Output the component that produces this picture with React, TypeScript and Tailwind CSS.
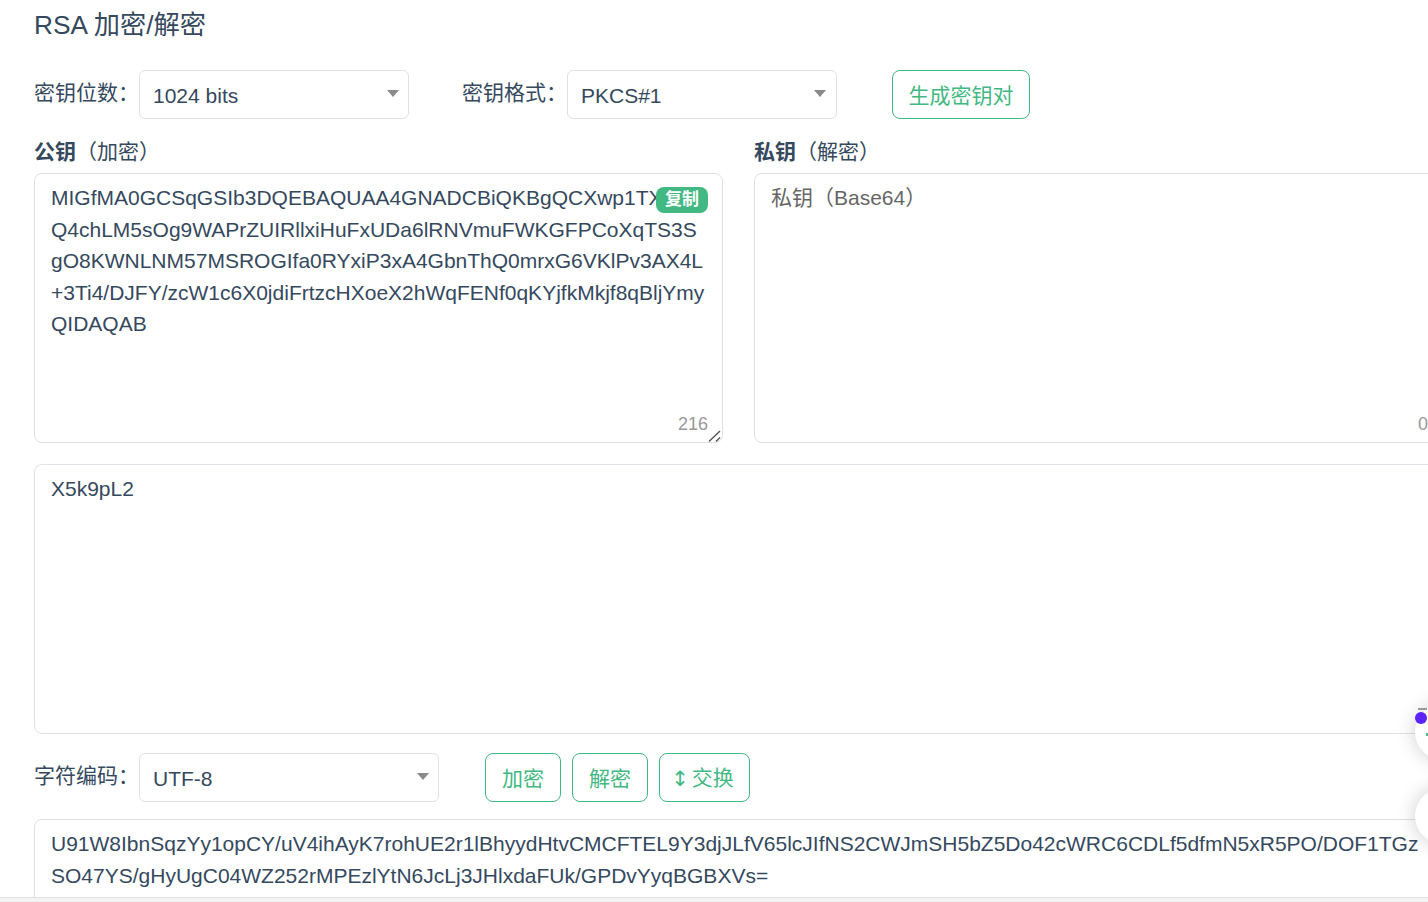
import React from 'react';

const font = { fontFamily: '"Liberation Sans", "Noto Sans CJK SC", sans-serif' };

const publicKey = `MIGfMA0GCSqGSIb3DQEBAQUAA4GNADCBiQKBgQCXwp1TX
Q4chLM5sOg9WAPrZUIRllxiHuFxUDa6lRNVmuFWKGFPCoXqTS3S
gO8KWNLNM57MSROGIfa0RYxiP3xA4GbnThQ0mrxG6VKlPv3AX4L
+3Ti4/DJFY/zcW1c6X0jdiFrtzcHXoeX2hWqFENf0qKYjfkMkjf8qBljYmy
QIDAQAB`;

const output = `U91W8IbnSqzYy1opCY/uV4ihAyK7rohUE2r1lBhyydHtvCMCFTEL9Y3djJLfV65lcJIfNS2CWJmSH5bZ5Do42cWRC6CDLf5dfmN5xR5PO/DOF1TGz
SO47YS/gHyUgC04WZ252rMPEzlYtN6JcLj3JHlxdaFUk/GPDvYyqBGBXVs=`;

function Select({ value, width, arrowPad = 'pr-[9px]' }: { value: string; width: string; arrowPad?: string }) {
  return (
    <div className={`flex h-[49px] items-center justify-between rounded-[6px] border border-[#e0e0e6] bg-white pl-[13px] ${arrowPad} ${width}`}>
      <span className="pt-[2px] text-[21px] text-[#35495e]">{value}</span>
      <span className="mb-[2px] h-0 w-0 border-x-[6px] border-t-[7px] border-x-transparent border-t-[#8a8a8a]" />
    </div>
  );
}

function GreenButton({ children, width }: { children: React.ReactNode; width: string }) {
  return (
    <button className={`h-[49px] rounded-[8px] border border-[#42b883] bg-white pt-[2px] text-[21px] text-[#42b883] ${width}`}>
      {children}
    </button>
  );
}

export default function App() {
  return (
    <div style={font} className="relative h-[902px] w-[1428px] overflow-hidden bg-white text-[#35495e]">
      <div className="w-[1443px] pl-[34px]">
        <h2 className="h-[70px] pt-[6px] text-[26.25px] leading-[39px] font-normal">RSA 加密/解密</h2>

        <div className="flex items-center">
          <span className="w-[105px] pb-[3px] text-[21px] whitespace-nowrap">{'密钥位数\uFF1A'}</span>
          <Select value="1024 bits" width="w-[270px]" />
          <span className="ml-[53px] w-[105px] pb-[3px] text-[21px] whitespace-nowrap">{'密钥格式\uFF1A'}</span>
          <Select value="PKCS#1" width="w-[270px]" arrowPad="pr-[10px]" />
          <div className="ml-[55px]">
            <GreenButton width="w-[138px]">生成密钥对</GreenButton>
          </div>
        </div>

        <div className="mt-[17px] flex gap-[31px]">
          <div className="w-[689px]">
            <div className="h-[37px] text-[21px] leading-[31px]"><b>公钥</b>{'\uFF08加密\uFF09'}</div>
            <div className="relative h-[270px]">
              <textarea
                readOnly
                wrap="off"
                value={publicKey}
                className="h-[270px] w-full resize-none overflow-hidden rounded-[8px] border border-[#e0e0e6] px-4 py-2 text-[21px] leading-[31.5px] text-[#35495e] outline-none"
              />
              <span className="absolute right-[15px] top-[14px] flex h-[26px] w-[52px] items-center justify-center rounded-[8px] bg-[#42b883] text-[17px] font-bold text-white">复制</span>
              <span className="absolute right-[15px] top-[238px] text-[18px] text-[#999]">216</span>
              <svg className="absolute left-[674px] top-[257px]" width="13" height="12" viewBox="0 0 13 12">
                <path d="M1 11.5 L12 1 M8 11.5 L12 7.5" stroke="#555" strokeWidth="1.4" fill="none" />
              </svg>
            </div>
          </div>
          <div className="w-[689px]">
            <div className="h-[37px] text-[21px] leading-[31px]"><b>私钥</b>{'\uFF08解密\uFF09'}</div>
            <div className="relative h-[270px]">
              <textarea
                readOnly
                placeholder={'私钥\uFF08Base64\uFF09'}
                className="h-[270px] w-full resize-none overflow-hidden rounded-[8px] border border-[#e0e0e6] px-4 py-2 text-[21px] leading-[31.5px] outline-none placeholder:text-[#666]"
              />
              <span className="absolute right-[15px] top-[238px] text-[18px] text-[#999]">0</span>
            </div>
          </div>
        </div>

        <textarea
          readOnly
          value="X5k9pL2"
          className="mt-[21px] block h-[270px] w-full resize-none overflow-hidden rounded-[8px] border border-[#e0e0e6] px-4 py-2 text-[21px] leading-[31.5px] text-[#35495e] outline-none"
        />

        <div className="mt-[19px] flex items-center">
          <span className="w-[105px] pb-[3px] text-[21px] whitespace-nowrap">{'字符编码\uFF1A'}</span>
          <Select value="UTF-8" width="w-[300px]" />
          <div className="ml-[46px] flex gap-[11px]">
            <GreenButton width="w-[76px]">加密</GreenButton>
            <GreenButton width="w-[76px]">解密</GreenButton>
            <GreenButton width="w-[91px] pr-[4px]">
              <span className="mr-[3px] inline-block translate-y-[1px] font-['DejaVu_Sans']">↕</span>交换
            </GreenButton>
          </div>
        </div>

        <textarea
          readOnly
          wrap="off"
          value={output}
          className="mt-[17px] block h-[270px] w-full resize-none overflow-hidden rounded-[8px] border border-[#e0e0e6] px-4 py-2 text-[21px] leading-[31.5px] text-[#35495e] outline-none"
        />
      </div>

      {/* floating widgets clipped by the right edge */}
      <div className="absolute left-[1415px] top-[704px] h-[56px] w-[56px] rounded-full bg-white shadow-[0_0_20px_rgba(0,0,0,0.2)]">
        <span className="absolute left-[3px] top-[4px] h-[2px] w-[9px] bg-[#999]" />
        <span className="absolute left-0 top-[8px] h-[12px] w-[12px] rounded-full bg-[#5b21ff]" />
        <span className="absolute left-[11px] top-[29px] h-[3px] w-[3px] bg-[#42b883]" />
      </div>
      <div className="absolute left-[1415px] top-[788px] h-[56px] w-[56px] rounded-full bg-white shadow-[0_0_20px_rgba(0,0,0,0.2)]" />

      {/* bottom edge */}
      <div className="absolute bottom-0 left-0 h-[5px] w-full border-t border-[#e0e0e0] bg-[#f4f4f4]" />
    </div>
  );
}
